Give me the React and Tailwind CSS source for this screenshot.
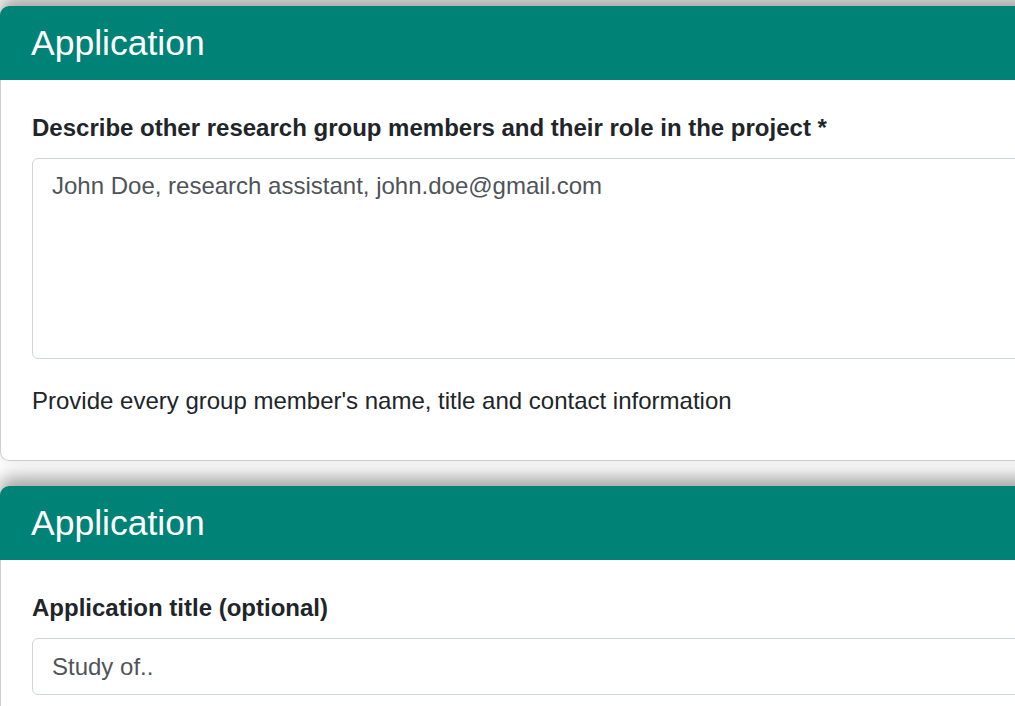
import React from "react"

const font = { fontFamily: '"Liberation Sans", Arial, sans-serif' }

function Card({ children }) {
  return (
    <section className="mt-[25px] w-[1120px] shrink-0 rounded-[9px] bg-white shadow-[0_-9px_18px_rgba(0,0,0,0.36)] first:mt-[6px]">
      <header className="flex h-[74px] items-center rounded-t-[9px] bg-[#008276] pl-[31px]">
        <h2 className="pt-[2px] text-[35.5px] font-normal leading-none text-white">Application</h2>
      </header>
      <div className="rounded-b-[9px] border border-t-0 border-[#cfcfcf] px-[31px] pt-[30px] pb-[41px]">
        {children}
      </div>
    </section>
  )
}

export default function App() {
  return (
    <div className="h-[706px] w-[1015px] overflow-hidden bg-white" style={font}>
      <div className="flex flex-col">
        <Card>
          <label className="block text-[24px] font-bold leading-[36px] text-[#212529]">
            Describe other research group members and their role in the project *
          </label>
          <textarea
            className="mt-[12px] block h-[201px] w-full resize-none rounded-[6px] border border-[#ced4da] px-[19px] py-[9px] text-[24px] leading-[36px] text-[#495057] outline-none placeholder:text-[#4f5459]"
            placeholder="John Doe, research assistant, john.doe@gmail.com"
          />
          <p className="mt-[24px] text-[24px] leading-[36px] text-[#212529]">
            Provide every group member's name, title and contact information
          </p>
        </Card>
        <Card>
          <label className="block text-[24px] font-bold leading-[36px] text-[#212529]">
            Application title (optional)
          </label>
          <input
            className="mt-[12px] block h-[57px] w-full rounded-[6px] border border-[#ced4da] px-[19px] text-[24px] text-[#495057] outline-none placeholder:text-[#4f5459]"
            placeholder="Study of.."
          />
        </Card>
      </div>
    </div>
  )
}
